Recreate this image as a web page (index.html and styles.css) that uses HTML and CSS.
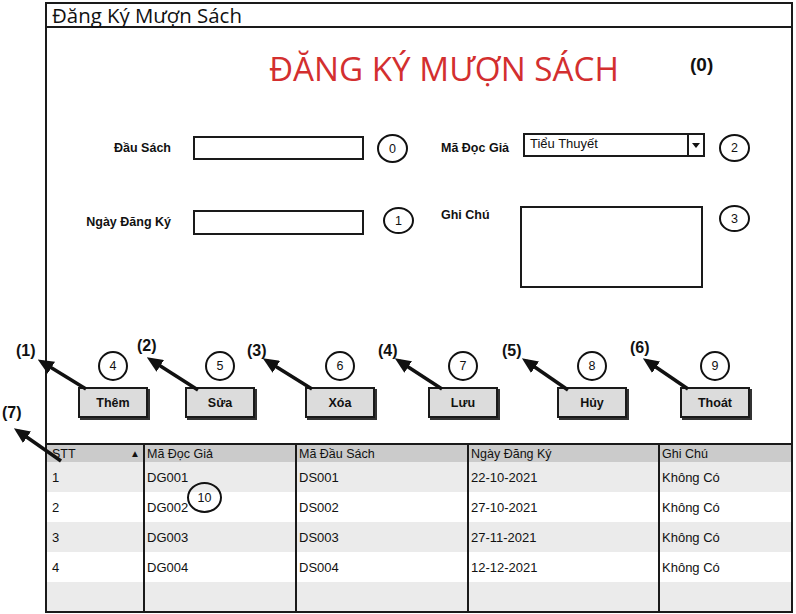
FILE: index.html
```html
<!DOCTYPE html>
<html lang="vi">
<head>
<meta charset="utf-8">
<title>Đăng Ký Mượn Sách</title>
<link rel="stylesheet" href="styles.css">
</head>
<body>
<div class="page">
  <div class="window">
    <div class="titlebar">Đăng Ký Mượn Sách</div>
    <div class="win-body">
      <div class="header">
        <h1 class="heading">ĐĂNG KÝ MƯỢN SÁCH</h1>
        <span class="zero">(0)</span>
      </div>
      <div class="form">
        <div class="lbl lbl-left row1">Đầu Sách</div>
        <div class="input in-a"></div>
        <div class="circle c-0">0</div>
        <div class="lbl lbl-right row1">Mã Đọc Giả</div>
        <div class="select"><span class="sel-text">Tiểu Thuyết</span><span class="caret"></span></div>
        <div class="circle c-2">2</div>

        <div class="lbl lbl-left row2">Ngày Đăng Ký</div>
        <div class="input in-b"></div>
        <div class="circle c-1">1</div>
        <div class="lbl lbl-right row2b">Ghi Chú</div>
        <div class="textarea"></div>
        <div class="circle c-3">3</div>
      </div>
      <div class="buttons">
        <div class="bgroup"><div class="circle">4</div><div class="btn">Thêm</div></div>
        <div class="bgroup"><div class="circle">5</div><div class="btn">Sửa</div></div>
        <div class="bgroup"><div class="circle">6</div><div class="btn">Xóa</div></div>
        <div class="bgroup"><div class="circle">7</div><div class="btn">Lưu</div></div>
        <div class="bgroup"><div class="circle">8</div><div class="btn">Hủy</div></div>
        <div class="bgroup"><div class="circle">9</div><div class="btn">Thoát</div></div>
      </div>
    </div>
  </div>

  <div class="table">
    <div class="trow thead">
      <div class="cell first">STT<span class="sort">▲</span></div>
      <div class="cell">Mã Đọc Giả</div>
      <div class="cell">Mã Đầu Sách</div>
      <div class="cell">Ngày Đăng Ký</div>
      <div class="cell">Ghi Chú</div>
    </div>
    <div class="trow alt">
      <div class="cell first">1</div><div class="cell">DG001</div><div class="cell">DS001</div><div class="cell">22-10-2021</div><div class="cell">Không Có</div>
    </div>
    <div class="trow">
      <div class="cell first">2</div><div class="cell">DG002</div><div class="cell">DS002</div><div class="cell">27-10-2021</div><div class="cell">Không Có</div>
    </div>
    <div class="trow alt">
      <div class="cell first">3</div><div class="cell">DG003</div><div class="cell">DS003</div><div class="cell">27-11-2021</div><div class="cell">Không Có</div>
    </div>
    <div class="trow">
      <div class="cell first">4</div><div class="cell">DG004</div><div class="cell">DS004</div><div class="cell">12-12-2021</div><div class="cell">Không Có</div>
    </div>
    <div class="trow alt last">
      <div class="cell first"></div><div class="cell"></div><div class="cell"></div><div class="cell"></div><div class="cell"></div>
    </div>
    <div class="circle c-10">10</div>
  </div>

  <svg class="arrows" width="796" height="614" viewBox="0 0 796 614" xmlns="http://www.w3.org/2000/svg">
    <defs>
      <marker id="ah" markerWidth="16" markerHeight="14" refX="11" refY="7" orient="auto" markerUnits="userSpaceOnUse">
        <path d="M0,0 L16,7 L0,14 z" fill="#111"/>
      </marker>
    </defs>
    <g stroke="#111" stroke-width="3.5" fill="none" marker-end="url(#ah)">
      <line x1="86" y1="389" x2="42" y2="362"/>
      <line x1="198" y1="390" x2="151" y2="360"/>
      <line x1="312" y1="389" x2="267" y2="361"/>
      <line x1="442" y1="389" x2="399" y2="361"/>
      <line x1="568" y1="390" x2="526" y2="361"/>
      <line x1="688" y1="389" x2="647" y2="361"/>
      <line x1="61" y1="461" x2="18" y2="431"/>
    </g>
  </svg>

  <span class="note n1">(1)</span>
  <span class="note n2">(2)</span>
  <span class="note n3">(3)</span>
  <span class="note n4">(4)</span>
  <span class="note n5">(5)</span>
  <span class="note n6">(6)</span>
  <span class="note n7">(7)</span>
</div>
</body>
</html>
```

FILE: styles.css
```css
* { box-sizing: border-box; }
html, body { margin: 0; padding: 0; background: #fff; }
body { font-family: "Liberation Sans", Arial, sans-serif; color: #111; }

.page { position: relative; width: 796px; height: 614px; overflow: hidden; }

.window {
  margin: 2px 0 0 45px;
  width: 748px;
  border: 2px solid #1a1a1a;
  border-bottom: none;
}
.titlebar {
  height: 24px;
  border-bottom: 2px solid #1a1a1a;
  padding-left: 5px;
  font-family: "Open Sans", sans-serif;
  font-size: 20.4px;
  line-height: 22px;
  color: #111;
  white-space: nowrap;
}
.win-body { height: 415px; }

.header {
  display: grid;
  grid-template-columns: 421px auto;
  padding-left: 222px;
  padding-top: 24px;
  align-items: start;
}
.heading {
  margin: 0;
  font-family: "Open Sans", sans-serif;
  font-weight: 400;
  font-size: 33.2px;
  line-height: 33px;
  color: #d32f2f;
  white-space: nowrap;
}
.zero {
  margin-top: 3px;
  font-weight: 700;
  font-size: 19px;
  line-height: 19px;
}

.form {
  margin-top: 48px;
  display: grid;
  grid-template-columns: 146px 185px 62px 83px 197px 40px;
  grid-template-rows: 30px 82px;
  row-gap: 43px;
  align-items: start;
}
.lbl { font-weight: 700; font-size: 12.5px; white-space: nowrap; }
.lbl-left { text-align: right; padding-right: 22px; }
.lbl-right { padding-left: 1px; }
.row1 { line-height: 30px; }
.row2 { line-height: 30px; margin-top: 1px; }
.row2b { line-height: 18px; }

.input { border: 2px solid #1a1a1a; background: #fff; width: 171px; }
.in-a { height: 24px; margin-top: 3px; }
.in-b { height: 25px; margin-top: 4px; }

.select {
  display: flex;
  width: 182px;
  height: 24px;
  border: 2px solid #1a1a1a;
  background: #fff;
}
.sel-text { flex: 1; padding-left: 5px; font-size: 13px; line-height: 18px; }
.caret {
  width: 16px;
  border-left: 2px solid #1a1a1a;
  display: flex;
  align-items: center;
  justify-content: center;
}
.caret::after {
  content: "";
  border-left: 4px solid transparent;
  border-right: 4px solid transparent;
  border-top: 5px solid #111;
}
.textarea {
  width: 183px;
  height: 82px;
  margin-left: -3px;
  border: 2px solid #1a1a1a;
  background: #fff;
}

.circle {
  width: 31px;
  height: 29px;
  border: 2px solid #111;
  border-radius: 50%;
  display: flex;
  align-items: center;
  justify-content: center;
  font-size: 12.5px;
  color: #111;
}
.c-0 { margin-top: 1px; margin-left: -1px; }
.c-1 { margin-top: 1px; margin-left: 5px; height: 27px; }
.c-2 { margin-top: 1px; margin-left: -1px; height: 28px; }
.c-3 { margin-top: -1px; margin-left: -1px; height: 27px; }

.buttons {
  margin-top: 63px;
  padding-left: 31px;
  display: grid;
  grid-template-columns: 107px 120px 123px 129px 123px 72px;
}
.bgroup { width: 70px; display: flex; flex-direction: column; align-items: center; gap: 6px; }
.bgroup .circle { width: 30px; height: 30px; }
.btn {
  width: 70px;
  height: 31px;
  background: #dcdcdc;
  border: 2px solid #1a1a1a;
  box-shadow: 2px 2px 0 #333;
  display: flex;
  align-items: center;
  justify-content: center;
  font-weight: 700;
  font-size: 12.5px;
}

.table {
  position: relative;
  margin-left: 45px;
  width: 748px;
  border: 2px solid #1a1a1a;
}
.trow {
  display: grid;
  grid-template-columns: 96px 152px 172px 191px 133px;
  height: 30px;
  background: #fff;
}
.trow.alt { background: #ebebeb; }
.trow.thead { height: 17px; background: #cbcbcb; }
.trow.last { height: 29px; }
.cell {
  border-left: 2px solid #1a1a1a;
  padding-left: 2px;
  font-size: 13px;
  display: flex;
  align-items: center;
  white-space: nowrap;
}
.cell.first { border-left: none; padding-left: 5px; }
.thead .cell { font-size: 12.5px; }
.sort { margin-left: auto; margin-right: 3px; font-size: 10px; }

.c-10 {
  position: absolute;
  left: 140px;
  top: 37px;
  width: 35px;
  height: 31px;
  background: transparent;
}

.arrows { position: absolute; left: 0; top: 0; pointer-events: none; }

.note {
  position: absolute;
  font-weight: 700;
  font-size: 16px;
  line-height: 16px;
  color: #111;
}
.n1 { left: 16px; top: 343px; }
.n2 { left: 137px; top: 338px; }
.n3 { left: 247px; top: 343px; }
.n4 { left: 378px; top: 343px; }
.n5 { left: 502px; top: 343px; }
.n6 { left: 630px; top: 340px; }
.n7 { left: 2px; top: 405px; }
```
